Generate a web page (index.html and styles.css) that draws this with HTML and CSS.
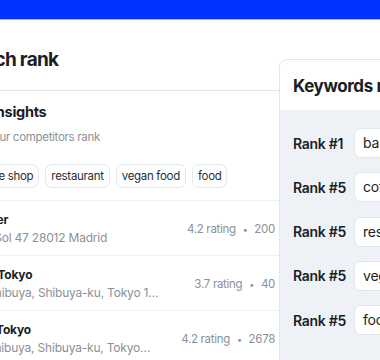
FILE: index.html
```html
<!DOCTYPE html>
<html lang="en">

<head>
  <meta charset="UTF-8">
  <meta name="viewport" content="width=device-width, initial-scale=1.0">
  <title>Search rank</title>
  <link rel="stylesheet" href="styles.css">
</head>

<body>
  <header class="topbar"></header>
  <div class="page">
    <main class="main">
      <h1 class="page-title">Search rank</h1>
      <section class="insights">
        <h2 class="insights-title">Rank insights</h2>
        <p class="insights-sub">Track your competitors rank</p>
        <div class="chips">
          <span class="chip">coffee shop</span>
          <span class="chip">restaurant</span>
          <span class="chip">vegan food</span>
          <span class="chip">food</span>
        </div>
        <ul class="places">
          <li class="place">
            <div class="place-info">
              <p class="place-name">Sol Baker</p>
              <p class="place-address">Puerta Sol 47 28012 Madrid</p>
            </div>
            <p class="place-rating">4.2 rating <span class="dot">•</span> 200</p>
          </li>
          <li class="place">
            <div class="place-info">
              <p class="place-name">Bakery Tokyo</p>
              <p class="place-address">1-2-3 Shibuya, Shibuya-ku, Tokyo 150-0002</p>
            </div>
            <p class="place-rating">3.7 rating <span class="dot">•</span> 40</p>
          </li>
          <li class="place">
            <div class="place-info">
              <p class="place-name">Bagels Tokyo</p>
              <p class="place-address">2-7-1 Shibuya, Shibuya-ku, Tokyo 150-0043</p>
            </div>
            <p class="place-rating">4.2 rating <span class="dot">•</span> 2678</p>
          </li>
        </ul>
      </section>
    </main>

    <aside class="keywords-card">
      <h2 class="keywords-title">Keywords ranking</h2>
      <div class="keywords-body">
        <div class="keyword-row">
          <span class="keyword-rank">Rank #1</span>
          <span class="keyword-input">bakery</span>
        </div>
        <div class="keyword-row">
          <span class="keyword-rank">Rank #5</span>
          <span class="keyword-input">coffee shop</span>
        </div>
        <div class="keyword-row">
          <span class="keyword-rank">Rank #5</span>
          <span class="keyword-input">restaurant</span>
        </div>
        <div class="keyword-row">
          <span class="keyword-rank">Rank #5</span>
          <span class="keyword-input">vegan food</span>
        </div>
        <div class="keyword-row">
          <span class="keyword-rank">Rank #5</span>
          <span class="keyword-input">food</span>
        </div>
      </div>
    </aside>
  </div>
</body>

</html>
```

FILE: styles.css
```css
* {
  box-sizing: border-box;
}

body {
  font-family: Inter, "Noto Sans", sans-serif;
  color: #1b1e25;
  background: #ffffff;
  margin: 0;
  width: 380px;
  height: 360px;
  overflow: hidden;
}

.topbar {
  height: 20px;
  background: #0033ff;
  border-bottom: 1px solid #a9b9ff;
}

.page {
  display: flex;
  align-items: flex-start;
  margin-left: -45px;
}

.main {
  flex: none;
  width: 324px;
}

.page-title {
  font-size: 19px;
  line-height: 24px;
  font-weight: 700;
  letter-spacing: -0.7px;
  margin: 28px 0 0;
  padding: 0 0 18px 0;
  border-bottom: 1px solid #e1e4e9;
  white-space: nowrap;
}

.insights {
  padding-top: 11px;
}

.insights-title {
  font-size: 14.5px;
  line-height: 20px;
  font-weight: 700;
  letter-spacing: -0.3px;
  margin: 0;
}

.insights-sub {
  font-size: 11.5px;
  line-height: 18px;
  color: #8b9099;
  margin: 6px 0 0;
  letter-spacing: -0.3px;
  white-space: nowrap;
}

.chips {
  display: flex;
  gap: 6px;
  margin-top: 18px;
  padding-left: 11px;
  white-space: nowrap;
}

.chip {
  font-size: 11.5px;
  line-height: 22px;
  letter-spacing: -0.3px;
  color: #2a2e35;
  padding: 0 5px;
  border: 1px solid #e3e6eb;
  border-radius: 7px;
}

.places {
  list-style: none;
  margin: 12px 0 0;
  padding: 0;
  border-top: 1px solid #eef0f3;
}

.place {
  display: flex;
  align-items: center;
  gap: 30px;
  height: 55px;
  padding: 2px 4px 0 0;
  border-bottom: 1px solid #eef0f3;
}

.place p {
  margin: 0;
}

.place-info {
  flex: 1;
  min-width: 0;
}

.place-name {
  font-size: 12px;
  line-height: 17px;
  font-weight: 700;
  letter-spacing: -0.2px;
  white-space: nowrap;
}

.place-address {
  font-size: 12px;
  line-height: 19px;
  color: #8b9099;
  letter-spacing: -0.2px;
  white-space: nowrap;
  overflow: hidden;
  text-overflow: ellipsis;
}

.place-rating {
  font-size: 11.5px;
  color: #8b9099;
  letter-spacing: -0.3px;
  white-space: nowrap;
}

.dot {
  margin: 0 4px;
  font-size: 9px;
}

.keywords-card {
  flex: none;
  width: 220px;
  height: 330px;
  margin-top: 39px;
  border: 1px solid #e2e5ea;
  border-radius: 8px;
  overflow: hidden;
  background: #eef1f6;
}

.keywords-title {
  font-size: 17px;
  line-height: 22px;
  font-weight: 700;
  letter-spacing: -0.4px;
  margin: 0;
  padding: 15px 13px 13px;
  background: #ffffff;
  white-space: nowrap;
}

.keywords-body {
  display: flex;
  flex-direction: column;
  gap: 14.3px;
  padding: 18px 13px;
}

.keyword-row {
  display: flex;
  align-items: center;
}

.keyword-rank {
  width: 61px;
  font-size: 14px;
  font-weight: 600;
  letter-spacing: -0.3px;
  white-space: nowrap;
}

.keyword-input {
  flex: 1;
  height: 30px;
  line-height: 28px;
  padding: 0 8px;
  font-size: 14px;
  letter-spacing: -0.2px;
  background: #ffffff;
  border: 1px solid #e2e5ea;
  border-radius: 7px;
  white-space: nowrap;
}
```
